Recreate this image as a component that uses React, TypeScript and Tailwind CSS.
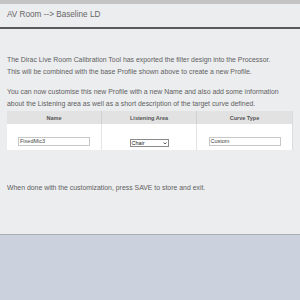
import React from "react";

export default function App() {
  return (
    <div className="w-[300px] h-[300px] bg-[#cbd2dd] overflow-hidden" style={{ fontFamily: '"Liberation Sans", Arial, sans-serif' }}>
      <div className="h-[4px] bg-[#c4c4c4]" />
      <div className="bg-[#ecedef] border-b-[2px] border-[#5a5a5a] h-[25px] flex items-center pl-[7px]">
        <span className="text-[8.2px] text-[#666]">AV Room --&gt; Baseline LD</span>
      </div>
      <div className="bg-[#ecedef] h-[206px] border-b border-[#a9adb3] px-[7px] pt-[25px] text-[6.9px] leading-[12px] text-[#606060]">
        <p>The Dirac Live Room Calibration Tool has exported the filter design into the Processor.</p>
        <p>This will be combined with the base Profile shown above to create a new Profile.</p>
        <p className="mt-[8px]">You can now customise this new Profile with a new Name and also add some information</p>
        <p>about the Listening area as well as a short description of the target curve defined.</p>
        <div className="grid grid-cols-3 bg-white mt-[1px] border-r border-[#dcdcdc]">
          <div className="bg-[#e2e2e2] h-[13px] flex items-center justify-center text-[5.5px] font-bold text-[#555] border-r border-[#d0d0d0]">Name</div>
          <div className="bg-[#e2e2e2] h-[13px] flex items-center justify-center text-[5.5px] font-bold text-[#555] border-r border-[#d0d0d0]">Listening Area</div>
          <div className="bg-[#e2e2e2] h-[13px] flex items-center justify-center text-[5.5px] font-bold text-[#555]">Curve Type</div>
          <div className="h-[26px] flex items-start justify-center pt-[13px] border-r border-[#e4e4e4]">
            <div className="w-[72px] h-[9px] border border-[#c8c8c8] bg-white text-[5.5px] leading-[7px] pl-[1px] text-[#444]">FixedMic3</div>
          </div>
          <div className="h-[26px] flex items-start justify-center pt-[15px] border-r border-[#e4e4e4]">
            <div className="w-[39px] h-[8px] border border-[#8a8a8a] bg-white text-[5.5px] leading-[6px] pl-[1px] text-[#222] flex justify-between items-center pr-[1px]">
              <span>Chair</span>
              <svg width="4" height="3" viewBox="0 0 4 3"><path d="M0.5 0.5 L2 2 L3.5 0.5" stroke="#333" strokeWidth="0.8" fill="none" /></svg>
            </div>
          </div>
          <div className="h-[26px] flex items-start justify-center pt-[13px]">
            <div className="w-[72px] h-[9px] border border-[#c8c8c8] bg-white text-[5.5px] leading-[7px] pl-[1px] text-[#444]">Custom</div>
          </div>
        </div>
        <p className="mt-[32px]">When done with the customization, press SAVE to store and exit.</p>
      </div>
    </div>
  );
}
